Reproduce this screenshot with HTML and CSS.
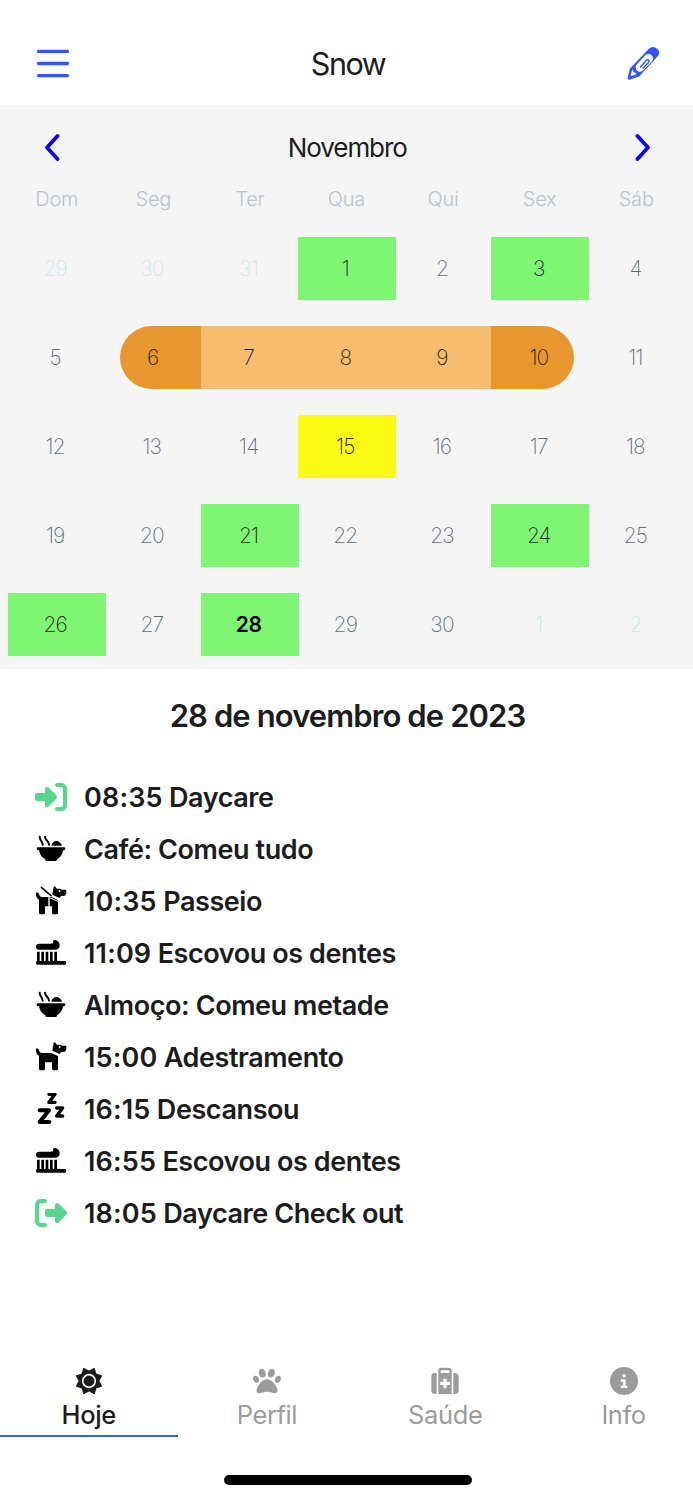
FILE: index.html
```html
<!DOCTYPE html>
<html lang="pt-BR">
<head>
    <meta charset="UTF-8">
    <meta name="viewport" content="width=device-width, initial-scale=1.0">
    <title>Snow</title>
    <link rel="stylesheet" href="styles.css">
</head>
<body>
    <!-- Shared icons -->
    <svg class="sprite" xmlns="http://www.w3.org/2000/svg">
        <symbol id="check-in" viewBox="0 0 512 512">
            <path d="M217.9 105.9L340.7 228.7c7.2 7.2 11.3 17.1 11.3 27.3s-4.1 20.1-11.3 27.3L217.9 406.1c-6.4 6.4-15 9.9-24 9.9c-18.7 0-33.9-15.2-33.9-33.9l0-62.1L32 320c-17.7 0-32-14.3-32-32l0-64c0-17.7 14.3-32 32-32l128 0 0-62.1c0-18.7 15.2-33.9 33.9-33.9c9 0 17.6 3.6 24 9.9zM352 416l64 0c17.7 0 32-14.3 32-32l0-256c0-17.7-14.3-32-32-32l-64 0c-17.7 0-32-14.3-32-32s14.3-32 32-32l64 0c53 0 96 43 96 96l0 256c0 53-43 96-96 96l-64 0c-17.7 0-32-14.3-32-32s14.3-32 32-32z"/>
        </symbol>
        <symbol id="check-out" viewBox="0 0 512 512">
            <path d="M377.9 105.9L500.7 228.7c7.2 7.2 11.3 17.1 11.3 27.3s-4.1 20.1-11.3 27.3L377.9 406.1c-6.4 6.4-15 9.9-24 9.9c-18.7 0-33.9-15.2-33.9-33.9l0-62.1-128 0c-17.7 0-32-14.3-32-32l0-64c0-17.7 14.3-32 32-32l128 0 0-62.1c0-18.7 15.2-33.9 33.9-33.9c9 0 17.6 3.6 24 9.9zM160 96L96 96c-17.7 0-32 14.3-32 32l0 256c0 17.7 14.3 32 32 32l64 0c17.7 0 32 14.3 32 32s-14.3 32-32 32l-64 0c-53 0-96-43-96-96L0 128C0 75 43 32 96 32l64 0c17.7 0 32 14.3 32 32s-14.3 32-32 32z"/>
        </symbol>
        <symbol id="bowl" viewBox="0 0 96 96">
            <path d="M14 11c-1 10 9 13 9 24M30 11c-1 10 12 13 12 24" fill="none" stroke="#000" stroke-width="6" stroke-linecap="round"/>
            <path d="M49 38C52 20 75 19 81 38zM8 43H88Q92 44 91 48Q90 52 85 52C82 64 76 73 67 78L64 84H33L30 78C20 73 14 64 12 52Q5 52 5 47Q5 44 8 43z"/>
        </symbol>
        <symbol id="dog" viewBox="0 0 96 96">
            <path d="M56 5Q58 2 61 5L66 11H75Q78 11 80 14H91Q94 14 94 18V22Q94 33 84 33H78L74 39L52 29z"/>
            <path d="M3 25Q4 20 9 23Q13 25 13 31Q15 36 21 36H49L69 45V83Q69 88 64 88H56Q51 88 51 83V64H30V83Q30 88 25 88H17Q12 88 12 83V44Q3 39 3 30z"/>
            <circle cx="74" cy="18" r="2.7" fill="#fff"/>
        </symbol>
        <symbol id="dog-walk" viewBox="0 0 96 96">
            <path d="M56 5Q58 2 61 5L66 11H75Q78 11 80 14H91Q94 14 94 18V22Q94 33 84 33H78L74 39L52 29z"/>
            <path d="M3 25Q4 20 9 23Q13 25 13 31Q15 36 21 36H40V64H30V83Q30 88 25 88H17Q12 88 12 83V44Q3 39 3 30z"/>
            <path d="M44 36H49L69 45V83Q69 88 64 88H56Q51 88 51 83V64H44z"/>
            <path d="M44 38L71 50" fill="none" stroke="#fff" stroke-width="3"/>
            <path d="M19 7L48 32" fill="none" stroke="#000" stroke-width="4.5" stroke-linecap="round"/>
            <circle cx="74" cy="18" r="2.7" fill="#fff"/>
        </symbol>
        <symbol id="brush" viewBox="0 0 96 96">
            <path d="M12 20H47C55 20 55 17 54 13Q54 9 60 9C69 10 74 17 74 25Q74 38 61 38H12Q3 38 3 29Q3 20 12 20zM6 44h8v28h5V44h8v28h5V44h8v28h5V44h8v28h5V44h8v28H90Q94 73 94 77Q94 83 89 83H7Q3 83 3 77Q3 72 6 72z"/>
        </symbol>
        <symbol id="sleep" viewBox="0 0 96 96">
            <g fill="none" stroke="#000" stroke-width="10" stroke-linecap="round" stroke-linejoin="round">
                <path d="M42 4H60L42 28H60"/>
                <path d="M14 52H42L14 87H43" stroke-width="12"/>
                <path d="M65 45H83L65 69H83"/>
            </g>
        </symbol>
    </svg>

    <div class="app">
        <header class="topbar">
            <svg class="menu-icon" viewBox="0 0 32 28"><path d="M2 2.3H30M2 14H30M2 25.7H30"/></svg>
            <h1>Snow</h1>
            <svg class="edit-icon" viewBox="0 0 105 110">
                <path d="M4 101L11 72L70 11Q80 2 92 10Q105 19 98 32L39 96L10 106Q3 107 4 101z" fill="#3056fa"/>
                <path d="M18 75L13 95L32 89L28 85Q21 84 18 75z" fill="#fff"/>
                <path d="M42 68L68 41" fill="none" stroke="#fff" stroke-width="27" stroke-linecap="round"/>
                <path d="M43 67L60 48Q65 43 69 47Q71 50 67 54L52 70" fill="none" stroke="#3056fa" stroke-width="4.5" stroke-linecap="round"/>
            </svg>
        </header>

        <section class="calendar">
            <div class="month">
                <svg class="chevron" viewBox="0 0 16 28"><path d="M13.5 3L3 14.5L13.5 26"/></svg>
                <h2>Novembro</h2>
                <svg class="chevron" viewBox="0 0 16 28"><path d="M2.5 3L13 14.5L2.5 26"/></svg>
            </div>
            <div class="weekdays">
                <span>Dom</span><span>Seg</span><span>Ter</span><span>Qua</span><span>Qui</span><span>Sex</span><span>Sáb</span>
            </div>
            <div class="days">
                <span class="day other">29</span>
                <span class="day other">30</span>
                <span class="day other">31</span>
                <span class="day green">1</span>
                <span class="day">2</span>
                <span class="day green">3</span>
                <span class="day">4</span>

                <span class="day">5</span>
                <span class="day stay start">6</span>
                <span class="day stay">7</span>
                <span class="day stay">8</span>
                <span class="day stay">9</span>
                <span class="day stay end">10</span>
                <span class="day">11</span>

                <span class="day">12</span>
                <span class="day">13</span>
                <span class="day">14</span>
                <span class="day yellow">15</span>
                <span class="day">16</span>
                <span class="day">17</span>
                <span class="day">18</span>

                <span class="day">19</span>
                <span class="day">20</span>
                <span class="day green">21</span>
                <span class="day">22</span>
                <span class="day">23</span>
                <span class="day green">24</span>
                <span class="day">25</span>

                <span class="day green">26</span>
                <span class="day">27</span>
                <span class="day green today">28</span>
                <span class="day">29</span>
                <span class="day">30</span>
                <span class="day other">1</span>
                <span class="day other">2</span>
            </div>
        </section>

        <main class="agenda">
            <h2 class="date">28 de novembro de 2023</h2>
            <ul class="events">
                <li><svg class="check"><use href="#check-in"/></svg><span><time>08:35</time> Daycare</span></li>
                <li><svg><use href="#bowl"/></svg><span>Café: Comeu tudo</span></li>
                <li><svg><use href="#dog-walk"/></svg><span><time>10:35</time> Passeio</span></li>
                <li><svg><use href="#brush"/></svg><span><time>11:09</time> Escovou os dentes</span></li>
                <li><svg><use href="#bowl"/></svg><span>Almoço: Comeu metade</span></li>
                <li><svg><use href="#dog"/></svg><span><time>15:00</time> Adestramento</span></li>
                <li><svg><use href="#sleep"/></svg><span><time>16:15</time> Descansou</span></li>
                <li><svg><use href="#brush"/></svg><span><time>16:55</time> Escovou os dentes</span></li>
                <li><svg class="check"><use href="#check-out"/></svg><span><time>18:05</time> Daycare Check out</span></li>
            </ul>
        </main>

        <nav class="tabs">
            <a class="tab active">
                <svg viewBox="0 0 32 32">
                    <path d="M21.9 1.9L23.8 8.2L30.1 10.1L27 16L30.1 21.9L23.8 23.8L21.9 30.1L16 27L10.1 30.1L8.2 23.8L1.9 21.9L5 16L1.9 10.1L8.2 8.2L10.1 1.9L16 5z" stroke="currentColor" stroke-width="1.6" stroke-linejoin="round"/>
                    <circle cx="16" cy="16" r="7.2" fill="none" stroke="#fff" stroke-width="1.9"/>
                </svg>
                <span>Hoje</span>
            </a>
            <a class="tab">
                <svg viewBox="0 0 512 512"><path d="M226.5 92.9c14.3 42.9-.3 86.2-32.6 96.8s-70.1-15.6-84.4-58.5s.3-86.2 32.6-96.8s70.1 15.6 84.4 58.5zM100.4 198.6c18.9 32.4 14.3 70.1-10.2 84.1s-59.7-.9-78.5-33.3S-2.7 179.3 21.8 165.3s59.7 .9 78.5 33.3zM69.2 401.2C121.6 259.9 214.7 224 256 224s134.4 35.9 186.8 177.2c3.6 9.7 5.2 20.1 5.2 30.5v1.6c0 25.8-20.9 46.7-46.7 46.7c-11.5 0-22.9-1.4-34-4.2l-88-22c-15.3-3.8-31.3-3.8-46.6 0l-88 22c-11.1 2.8-22.5 4.2-34 4.2C84.9 480 64 459.1 64 433.3v-1.6c0-10.4 1.6-20.8 5.2-30.5zM421.8 282.7c-24.5-14-29.1-51.7-10.2-84.1s54-47.3 78.5-33.3s29.1 51.7 10.2 84.1s-54 47.3-78.5 33.3zM310.1 189.7c-32.3-10.6-46.9-53.9-32.6-96.8s52.1-69.1 84.4-58.5s46.9 53.9 32.6 96.8s-52.1 69.1-84.4 58.5z"/></svg>
                <span>Perfil</span>
            </a>
            <a class="tab">
                <svg viewBox="0 0 84 84">
                    <path d="M17 18V81H12Q1 81 1 70V29Q1 18 12 18zM67 18H72Q83 18 83 29V70Q83 81 72 81H67z"/>
                    <path fill-rule="evenodd" d="M22 81V11Q22 2 32 2H52Q62 2 62 11V81zM29 10V18H55V10zM37 35V44H28V54H37V64H47V54H57V44H47V35z"/>
                </svg>
                <span>Saúde</span>
            </a>
            <a class="tab">
                <svg viewBox="0 0 512 512"><path d="M256 512A256 256 0 1 0 256 0a256 256 0 1 0 0 512zM216 336h24V272H216c-13.3 0-24-10.7-24-24s10.7-24 24-24h48c13.3 0 24 10.7 24 24v88h8c13.3 0 24 10.7 24 24s-10.7 24-24 24H216c-13.3 0-24-10.7-24-24s10.7-24 24-24zm40-208a32 32 0 1 1 0 64 32 32 0 1 1 0-64z"/></svg>
                <span>Info</span>
            </a>
        </nav>
        <div class="home-bar"></div>
    </div>
</body>
</html>
```
FILE: styles.css
```css
* {
    box-sizing: border-box;
}

body {
    margin: 0;
    background-color: #fff;
    color: #1c1c1e;
    font-family: Inter, "Liberation Sans", sans-serif;
}

h1, h2, ul {
    margin: 0;
    padding: 0;
}

.sprite {
    display: none;
}

.app {
    display: flex;
    flex-direction: column;
    width: 693px;
    height: 1500px;
    overflow: hidden;
}

/* Header */
.topbar {
    display: flex;
    justify-content: space-between;
    align-items: center;
    height: 105px;
    padding: 21px 32px 0 36px;
}

.topbar h1 {
    font-size: 30.5px;
    font-weight: 400;
    letter-spacing: -1.5px;
}

.menu-icon {
    width: 34px;
    height: 29px;
    fill: none;
    stroke: #3056fa;
    stroke-width: 3.2;
    stroke-linecap: round;
}

.edit-icon {
    width: 35px;
    height: 36px;
}

/* Calendar */
.calendar {
    height: 564px;
    padding: 23px 8.5px 0 7.5px;
    background-color: #f5f5f5;
}

.month {
    display: flex;
    justify-content: space-between;
    align-items: center;
    height: 38px;
    padding: 0 33.5px 0 36px;
}

.month h2 {
    font-size: 26px;
    font-weight: 400;
    letter-spacing: -1.1px;
}

.chevron {
    width: 16px;
    height: 28px;
    fill: none;
    stroke: #0b00f5;
    stroke-width: 3.8;
    stroke-linecap: round;
    stroke-linejoin: round;
}

.weekdays, .days {
    display: grid;
    grid-template-columns: repeat(7, 1fr);
}

.weekdays {
    height: 44px;
    margin-top: 11px;
    padding-left: 1px;
    color: #b9c2cd;
    font-size: 20px;
    font-weight: 300;
    letter-spacing: -0.2px;
    line-height: 44px;
    text-align: center;
}

.days {
    row-gap: 26px;
    margin-top: 16px;
}

.day {
    height: 63px;
    margin-right: -1.6px;
    padding-right: 3px;
    color: #626c78;
    font-size: 21px;
    font-weight: 200;
    letter-spacing: -0.9px;
    line-height: 63px;
    text-align: center;
}

.other {
    color: #c9e6ea;
}

.green {
    background-color: #7ef573;
    color: #222;
}

.yellow {
    background-color: #fafa12;
    color: #222;
}

.stay {
    background-color: #f7bc6f;
    color: #222;
}

.start {
    margin-left: 15.5px;
    padding-right: 17px;
    border-radius: 32px 0 0 32px;
    background-color: #e8972e;
}

.end {
    margin-right: 14px;
    padding: 0 0 0 13px;
    border-radius: 0 32px 32px 0;
    background-color: #e8972e;
}

.today {
    color: #000;
    font-weight: 600;
    letter-spacing: -0.5px;
}

/* Events of the day */
.agenda {
    flex: 1;
    padding-top: 27px;
}

.date {
    padding-left: 2px;
    font-size: 31px;
    font-weight: 600;
    letter-spacing: -0.9px;
    line-height: 40px;
    text-align: center;
}

.events {
    margin-top: 35px;
    list-style: none;
}

.events li {
    display: flex;
    align-items: center;
    gap: 17px;
    height: 52px;
    padding-left: 35px;
    font-size: 27px;
    font-weight: 580;
    letter-spacing: -0.42px;
}

.events time {
    letter-spacing: 0.15px;
}

.events svg {
    width: 32px;
    height: 32px;
}

.events .check {
    fill: #57d68d;
}

/* Bottom tabs */
.tabs {
    display: grid;
    grid-template-columns: repeat(4, 178.3px);
    height: 79px;
}

.tab {
    display: flex;
    flex-direction: column;
    align-items: center;
    padding: 9px 1px 0 0;
    color: #9b9b9b;
    font-size: 25.5px;
    letter-spacing: -0.4px;
    line-height: 36px;
}

.tab svg {
    width: 28px;
    height: 28px;
    margin-bottom: 2px;
    fill: currentColor;
}

.active {
    border-bottom: 2px solid #3a61d0;
    color: #1c1c1e;
    font-weight: 500;
}

.home-bar {
    width: 248px;
    height: 10px;
    margin: 38px 0 15px 224px;
    border-radius: 5px;
    background-color: #000;
}
```
